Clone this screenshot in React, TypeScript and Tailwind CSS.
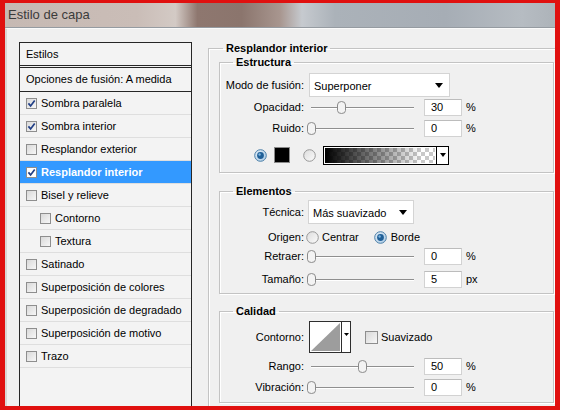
import React from "react";

type Style = {
  label: string;
  checked?: boolean;
  active?: boolean;
  indent?: boolean;
};

const styles: Style[] = [
  { label: "Sombra paralela", checked: true },
  { label: "Sombra interior", checked: true },
  { label: "Resplandor exterior" },
  { label: "Resplandor interior", checked: true, active: true },
  { label: "Bisel y relieve" },
  { label: "Contorno", indent: true },
  { label: "Textura", indent: true },
  { label: "Satinado" },
  { label: "Superposición de colores" },
  { label: "Superposición de degradado" },
  { label: "Superposición de motivo" },
  { label: "Trazo" },
];

function CheckBox({ checked = false, light = false, size = 11 }: { checked?: boolean; light?: boolean; size?: number }) {
  return (
    <span
      className={`flex shrink-0 items-center justify-center border border-[#8e8e8e] ${
        light ? "bg-white" : "bg-[linear-gradient(135deg,#d9d9d9,#f7f7f7)]"
      } ${size === 11 ? "h-[11px] w-[11px]" : "h-[13px] w-[13px]"}`}
    >
      {checked && (
        <svg width="9" height="9" viewBox="0 0 9 9">
          <path d="M1.4 4.4 L3.6 6.9 L7.7 1.5" fill="none" stroke="#213f86" strokeWidth="1.7" />
        </svg>
      )}
    </span>
  );
}

function Radio({ on = false }: { on?: boolean }) {
  return (
    <svg width="13" height="13" viewBox="0 0 13 13" className="shrink-0">
      <defs>
        <linearGradient id={on ? "radio-on" : "radio-off"} x1="0" y1="0" x2="1" y2="1">
          <stop offset="0" stopColor={on ? "#e4eff8" : "#dcdcdc"} />
          <stop offset="1" stopColor={on ? "#a9c9e4" : "#fbfbfb"} />
        </linearGradient>
      </defs>
      <circle cx="6.5" cy="6.5" r="5.8" fill={`url(#${on ? "radio-on" : "radio-off"})`} stroke={on ? "#4b7fa8" : "#979797"} />
      {on && (
        <>
          <circle cx="6.5" cy="6.5" r="3.4" fill="#1f5f97" />
          <circle cx="5.6" cy="5.5" r="1.2" fill="#7fb5e0" />
        </>
      )}
    </svg>
  );
}

function Slider({ pct }: { pct: number }) {
  return (
    <div className="relative ml-[3px] h-[15px] w-[110px] shrink-0">
      <div className="absolute left-[4px] right-[3px] top-[7px] h-[2px] border-t border-b border-t-[#8f8f8f] border-b-white" />
      <svg className="absolute top-[1px]" style={{ left: pct * 1.03 - 0.5 }} width="9" height="13" viewBox="0 0 9 13">
        <path
          d="M0.5 4 Q0.5 0.5 4.5 0.5 Q8.5 0.5 8.5 4 L8.5 9.5 Q8.5 12.5 4.5 12.5 Q0.5 12.5 0.5 9.5 Z"
          fill="#f3f3f3"
          stroke="#8a8a8a"
        />
      </svg>
    </div>
  );
}

function NumField({ value, unit }: { value: string; unit: string }) {
  return (
    <>
      <div className="ml-[7px] h-[17px] w-[38px] shrink-0 border border-[#d2d2d2] border-t-[#bcbcbc] bg-white pl-[6px] leading-[15px]">
        {value}
      </div>
      <span className="ml-[4px]">{unit}</span>
    </>
  );
}

function Select({ value, width }: { value: string; width: string }) {
  return (
    <div className={`flex h-[24px] shrink-0 items-center justify-between border border-[#d4d4d4] bg-white pl-[4px] pr-[6px] ${width}`}>
      <span className="pt-[2px]">{value}</span>
      <svg width="8" height="5" viewBox="0 0 8 5">
        <path d="M0 0 H8 L4 5 Z" fill="#000" />
      </svg>
    </div>
  );
}

function Field({ label, className = "", children }: { label: string; className?: string; children?: React.ReactNode }) {
  return (
    <div className={`flex items-center ${className}`}>
      <span className="w-[84px] shrink-0 text-right">{label}</span>
      {children}
    </div>
  );
}

function Group({ title, className = "", children }: { title: string; className?: string; children: React.ReactNode }) {
  return (
    <fieldset
      className={`w-[335px] border border-[#c3c3c3] shadow-[inset_1px_1px_0_#fff,1px_1px_0_#fff] ${className}`}
    >
      <legend className="ml-[13px] px-[3px] text-[11px] font-bold leading-[14px]">{title}</legend>
      {children}
    </fieldset>
  );
}

export default function App() {
  return (
    <div className="h-[413px] w-[563px] bg-white">
      <div
        className={`flex h-[410px] w-[560px] flex-col border-b-[4px] border-l-[5px] border-r-[5px] border-t-[3px] border-[#e0100f] text-[11px] text-black font-['Liberation_Sans',Arial,sans-serif]`}
      >
        {/* window caption */}
        <div className="flex h-[25px] shrink-0 items-center border-b border-[#959ba1] bg-[linear-gradient(90deg,#c6b9b3_0%,#cabdb7_24%,#d3cac5_31%,#8e776f_35%,#8b756d_43%,#a8968f_50%,#c6cacf_54%,#abb2b9_60%,#a6adb5_80%,#b6bcc2_94%,#adb3b9_100%)] pl-[3px]">
          <span className="text-[13px] text-[#3b3b3b]">Estilo de capa</span>
        </div>

        {/* dialog body */}
        <div className="flex min-h-0 flex-1 overflow-hidden border-l-2 border-t border-l-[#d9d6d3] border-t-[#fafafa] bg-[#f0f0f0] pl-[12px] pt-[13px]">
          {/* style list */}
          <div className="flex w-[173px] shrink-0 flex-col border-l border-r border-t border-[#262626] bg-[#f3f3f3]">
            <div className="flex h-[25px] shrink-0 items-center border-b-[3px] border-double border-[#262626] pl-[6px]">
              Estilos
            </div>
            <div className="flex h-[24px] shrink-0 items-center border-b border-[#262626] pl-[6px]">
              Opciones de fusión: A medida
            </div>
            {styles.map((s) => (
              <div
                key={s.label}
                className={`flex h-[23px] shrink-0 items-center gap-[4px] border-b border-[#dedede] ${
                  s.indent ? "pl-[20px]" : "pl-[6px]"
                } ${s.active ? "bg-[#3399ff] font-bold text-white" : ""}`}
              >
                <CheckBox checked={s.checked} light={s.active} />
                <span>{s.label}</span>
              </div>
            ))}
          </div>

          {/* settings */}
          <fieldset className="-mt-px ml-[16px] w-[360px] shrink-0 border-l border-t border-[#c3c3c3] pl-[10px] shadow-[inset_1px_1px_0_#fff]">
            <legend className="ml-[4px] px-[3px] text-[11px] font-bold leading-[14px]">Resplandor interior</legend>

            <Group title="Estructura" className="pb-[8px]">
              <Field label="Modo de fusión:" className="mt-[4px]">
                <span className="w-[5px]" />
                <Select value="Superponer" width="w-[141px]" />
              </Field>
              <Field label="Opacidad:" className="mt-[2px] h-[17px]">
                <Slider pct={30} />
                <NumField value="30" unit="%" />
              </Field>
              <Field label="Ruido:" className="mt-[4px] h-[17px]">
                <Slider pct={0} />
                <NumField value="0" unit="%" />
              </Field>
              <div className="mt-[9px] flex h-[18px] items-center pl-[34px]">
                <Radio on />
                <span className="ml-[7px] h-[16px] w-[16px] border border-[#8a8a8a] bg-black" />
                <span className="ml-[13px]">
                  <Radio />
                </span>
                <div className="ml-[7px] flex h-[19px] border border-black">
                  <div className="h-full w-[112px] border border-white bg-[linear-gradient(to_right,#000,rgba(0,0,0,0)_88%),conic-gradient(#c9c9c9_25%,#fff_0_50%,#c9c9c9_0_75%,#fff_0)] [background-size:100%_100%,8px_8px]" />
                  <div className="flex w-[12px] items-center justify-center border-l border-black bg-white">
                    <svg width="6" height="4" viewBox="0 0 6 4">
                      <path d="M0 0 H6 L3 4 Z" fill="#000" />
                    </svg>
                  </div>
                </div>
              </div>
            </Group>

            <Group title="Elementos" className="mt-[11px] pb-[5px]">
              <Field label="Técnica:" className="mt-[2px]">
                <span className="w-[4px]" />
                <Select value="Más suavizado" width="w-[106px]" />
              </Field>
              <Field label="Origen:" className="mt-[5px] h-[16px]">
                <span className="ml-[2px]">
                  <Radio />
                </span>
                <span className="ml-[3px]">Centrar</span>
                <span className="ml-[15px]">
                  <Radio on />
                </span>
                <span className="ml-[4px]">Borde</span>
              </Field>
              <Field label="Retraer:" className="mt-[3px] h-[17px]">
                <Slider pct={0} />
                <NumField value="0" unit="%" />
              </Field>
              <Field label="Tamaño:" className="mt-[6px] h-[17px]">
                <Slider pct={0} />
                <NumField value="5" unit="px" />
              </Field>
            </Group>

            <Group title="Calidad" className="mt-[10px] pb-[6px]">
              <Field label="Contorno:" className="mt-[3px] h-[32px]">
                <div className="ml-[5px] flex h-[32px] w-[42px] shrink-0 border border-[#2e2e2e] bg-white">
                  <svg width="31" height="30" viewBox="0 0 31 30" className="shrink-0">
                    <polygon points="1,29 30,1 30,29" fill="#9d9d9d" />
                  </svg>
                  <div className="flex flex-1 justify-center border-l border-[#2e2e2e] pt-[11px]">
                    <svg width="5" height="3" viewBox="0 0 5 3">
                      <path d="M0 0 H5 L2.5 3 Z" fill="#000" />
                    </svg>
                  </div>
                </div>
                <span className="ml-[14px]">
                  <CheckBox size={13} />
                </span>
                <span className="ml-[3px]">Suavizado</span>
              </Field>
              <Field label="Rango:" className="mt-[5px] h-[17px]">
                <Slider pct={50} />
                <NumField value="50" unit="%" />
              </Field>
              <Field label="Vibración:" className="mt-[4px] h-[17px]">
                <Slider pct={0} />
                <NumField value="0" unit="%" />
              </Field>
            </Group>
          </fieldset>
        </div>
      </div>
    </div>
  );
}
